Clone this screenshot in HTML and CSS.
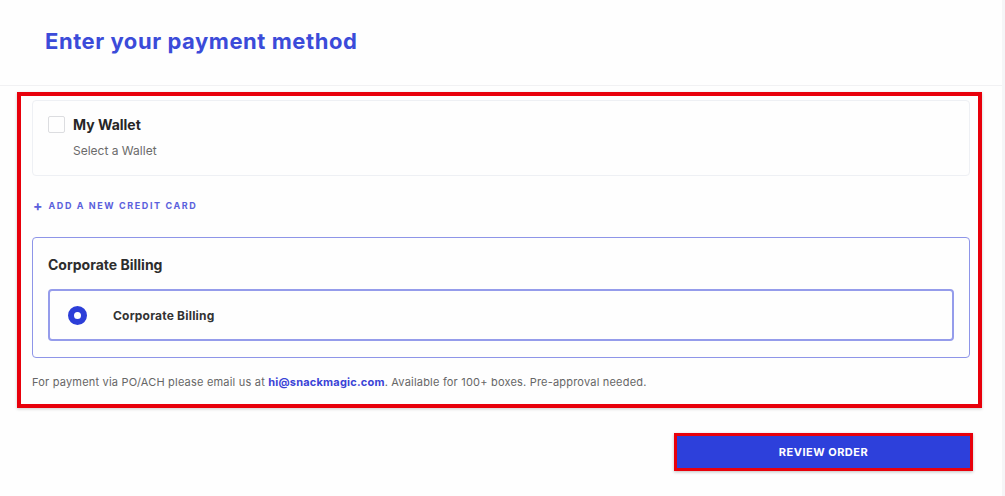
FILE: index.html
```html
<!DOCTYPE html>
<html lang="en">
<head>
<meta charset="UTF-8">
<meta name="viewport" content="width=device-width, initial-scale=1.0">
<link rel="stylesheet" href="styles.css">
</head>
<body>
<div class="page">
    <div class="header">
        <h1 class="title">Enter your payment method</h1>
    </div>

    <div class="payment">
        <div class="wallet-card">
            <div class="wallet-row">
                <span class="check"></span>
                <span class="wallet-name">My Wallet</span>
            </div>
            <p class="wallet-sub">Select a Wallet</p>
        </div>

        <a class="add-card" href="#"><span class="plus">+</span>ADD A NEW CREDIT CARD</a>

        <div class="corp">
            <h3 class="corp-title">Corporate Billing</h3>
            <div class="corp-option">
                <span class="radio"></span>
                <span class="corp-label">Corporate Billing</span>
            </div>
        </div>

        <p class="note">For payment via PO/ACH please email us at <a href="#">hi@snackmagic.com</a>. Available for 100+ boxes. Pre-approval needed.</p>
    </div>

    <div class="actions">
        <button class="review">REVIEW ORDER</button>
    </div>
</div>
</body>
</html>
```

FILE: styles.css
```css
body {
  margin: 0;
  background-color: #f5f5f7;
  font-family: Inter, "Open Sans", sans-serif;
}

.page {
  width: 1002px;
  height: 496px;
  background-color: #fefefe;
}

.header {
  height: 86px;
  border-bottom: 1px solid #f1f1f3;
  display: flex;
  align-items: center;
  padding-left: 45px;
  box-sizing: border-box;
}

.title {
  margin: 0 0 4px 0;
  font-size: 22px;
  font-weight: 700;
  color: #3b4bd9;
  letter-spacing: 0.55px;
}

.payment {
  margin: 6px 0 0 17px;
  width: 965px;
  height: 316px;
  box-sizing: border-box;
  border: 4px solid #e8000b;
  box-shadow: 0 1px 3px rgba(0,0,0,0.2);
  padding: 4px 8px 0 11px;
}

.wallet-card {
  height: 76px;
  box-sizing: border-box;
  border: 1px solid #eef0f4;
  border-radius: 4px;
  padding: 15px 15px 0 15px;
}

.wallet-row {
  display: flex;
  align-items: center;
  gap: 8px;
}

.check {
  width: 15px;
  height: 15px;
  border: 1px solid #dcdde0;
  border-radius: 2px;
}

.wallet-name {
  font-size: 14px;
  font-weight: 700;
  color: #262626;
}

.wallet-sub {
  margin: 10px 0 0 25px;
  font-size: 12px;
  color: #6b6b6b;
}

.add-card {
  display: flex;
  align-items: center;
  margin: 21px 0 0 1px;
  font-size: 9px;
  font-weight: 700;
  letter-spacing: 1.6px;
  color: #5a60dc;
  text-decoration: none;
}

.plus {
  font-size: 14px;
  margin-right: 6px;
  letter-spacing: 0;
}

.corp {
  margin-top: 23px;
  height: 121px;
  box-sizing: border-box;
  border: 1px solid #8e95e8;
  border-radius: 4px;
  padding: 18px 15px 0 15px;
}

.corp-title {
  margin: 0;
  font-size: 14px;
  font-weight: 700;
  color: #2d2d2d;
}

.corp-option {
  margin-top: 16px;
  height: 52px;
  box-sizing: border-box;
  border: 2px solid #959ceb;
  border-radius: 4px;
  display: flex;
  align-items: center;
  padding-left: 18px;
}

.radio {
  width: 19px;
  height: 19px;
  border-radius: 50%;
  box-sizing: border-box;
  border: 6px solid #2c3ed8;
  background-color: #fff;
}

.corp-label {
  margin-left: 26px;
  font-size: 12px;
  font-weight: 700;
  color: #333;
  letter-spacing: 0.2px;
}

.note {
  margin: 17px 0 0 0;
  font-size: 11px;
  color: #666;
  letter-spacing: 0.2px;
}

.note a {
  color: #3a43d6;
  font-weight: 700;
  text-decoration: none;
}

.actions {
  display: flex;
  justify-content: flex-end;
  padding: 25px 29px 0 0;
}

.review {
  width: 299px;
  height: 38px;
  border: 3px solid #e8000b;
  background-color: #2d40db;
  color: #fff;
  font-family: Inter, sans-serif;
  font-size: 11px;
  font-weight: 700;
  letter-spacing: 0.5px;
  box-shadow: 0 1px 3px rgba(0,0,0,0.25);
}
```
